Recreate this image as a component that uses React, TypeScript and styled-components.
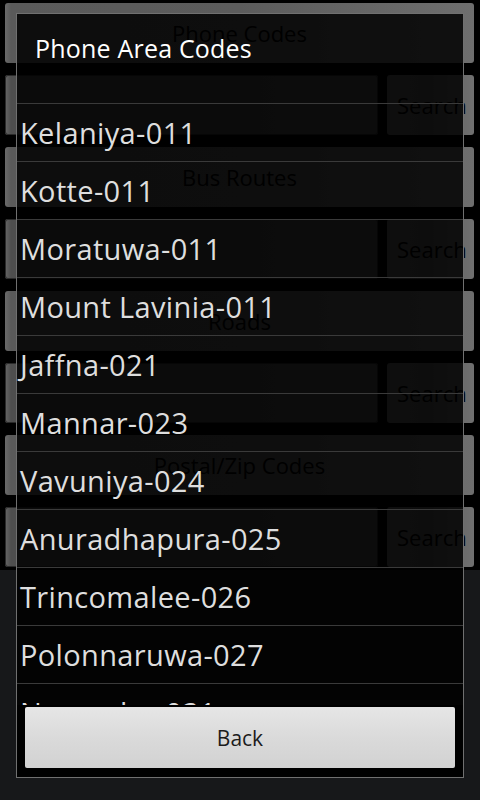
import React from 'react';
import styled, { createGlobalStyle } from 'styled-components';

const GlobalStyle = createGlobalStyle`
  html, body {
    margin: 0;
    padding: 0;
    background: #17181a;
    font-family: 'Open Sans', 'DejaVu Sans', sans-serif;
  }
`;

const Screen = styled.div`
  position: relative;
  width: 480px;
  height: 800px;
  overflow: hidden;
  background: #17181a;
`;

// the activity behind the dialog, already dimmed
const Page = styled.div`
  display: flex;
  flex-direction: column;
  gap: 12px;
  padding: 3px 6px 3px 5px;
  background: #000;
`;

const WideButton = styled.div`
  height: 60px;
  border-radius: 3px;
  background: linear-gradient(to right, #6a6a6a 0, #5a5a5a 6px, #5c5c5c 50%, #6e6e6e 100%);
  display: flex;
  align-items: center;
  justify-content: center;
  font-size: 22px;
  color: #000;
`;

const SearchRow = styled.div`
  display: flex;
  gap: 9px;
  height: 60px;
`;

const EditBox = styled.div`
  flex: 1;
  border-radius: 3px;
  background: linear-gradient(to right, #666 0, #4e4e4e 6px, #4a4a4a 50%, #555 100%);
  box-shadow: inset 0 0 0 1px #2a2a2a;
`;

const SearchButton = styled.div`
  width: 87px;
  border-radius: 3px;
  background: linear-gradient(to right, #5e5e5e 0, #5a5a5a 50%, #707070 100%);
  display: flex;
  align-items: center;
  padding-left: 10px;
  box-sizing: border-box;
  overflow: hidden;
  white-space: nowrap;
  font-size: 22px;
  color: #000;
`;

const Dialog = styled.div`
  position: absolute;
  top: 13px;
  left: 16px;
  width: 448px;
  height: 765px;
  box-sizing: border-box;
  border: 1px solid #707070;
  background: rgba(0, 0, 0, 0.85);
  display: flex;
  flex-direction: column;
`;

const Title = styled.div`
  height: 89px;
  box-sizing: border-box;
  padding: 19px 0 0 18px;
  line-height: 30px;
  font-size: 25px;
  letter-spacing: 0.2px;
  color: #fff;
`;

const List = styled.div`
  height: 602px;
  overflow: hidden;
`;

const Item = styled.div`
  height: 58px;
  box-sizing: border-box;
  border-top: 1px solid #3a3a3a;
  padding-left: 3px;
  line-height: 57px;
  font-size: 29px;
  letter-spacing: 0.35px;
  color: #dedede;
  white-space: nowrap;
`;

const ButtonBar = styled.div`
  flex: 1;
  padding: 2px 8px 0;
  background: #000;
`;

const BackButton = styled.button`
  display: block;
  width: 100%;
  height: 61px;
  border: none;
  border-radius: 2px;
  background: linear-gradient(to bottom, #e6e6e6 0%, #dadada 50%, #d2d2d2 100%);
  font-family: inherit;
  font-size: 21px;
  color: #1c1c1c;
`;

const rows = [
  { kind: 'button', label: 'Phone Codes' },
  { kind: 'search' },
  { kind: 'button', label: 'Bus Routes' },
  { kind: 'search' },
  { kind: 'button', label: 'Roads' },
  { kind: 'search' },
  { kind: 'button', label: 'Postal/Zip Codes' },
  { kind: 'search' },
];

const codes = [
  'Kelaniya-011',
  'Kotte-011',
  'Moratuwa-011',
  'Mount Lavinia-011',
  'Jaffna-021',
  'Mannar-023',
  'Vavuniya-024',
  'Anuradhapura-025',
  'Trincomalee-026',
  'Polonnaruwa-027',
  'Negombo-031',
];

export default function App() {
  return (
    <Screen>
      <GlobalStyle />
      <Page>
        {rows.map((r, i) =>
          r.kind === 'button' ? (
            <WideButton key={i}>{r.label}</WideButton>
          ) : (
            <SearchRow key={i}>
              <EditBox />
              <SearchButton>Search</SearchButton>
            </SearchRow>
          )
        )}
      </Page>
      <Dialog>
        <Title>Phone Area Codes</Title>
        <List>
          {codes.map((c) => (
            <Item key={c}>{c}</Item>
          ))}
        </List>
        <ButtonBar>
          <BackButton>Back</BackButton>
        </ButtonBar>
      </Dialog>
    </Screen>
  );
}
